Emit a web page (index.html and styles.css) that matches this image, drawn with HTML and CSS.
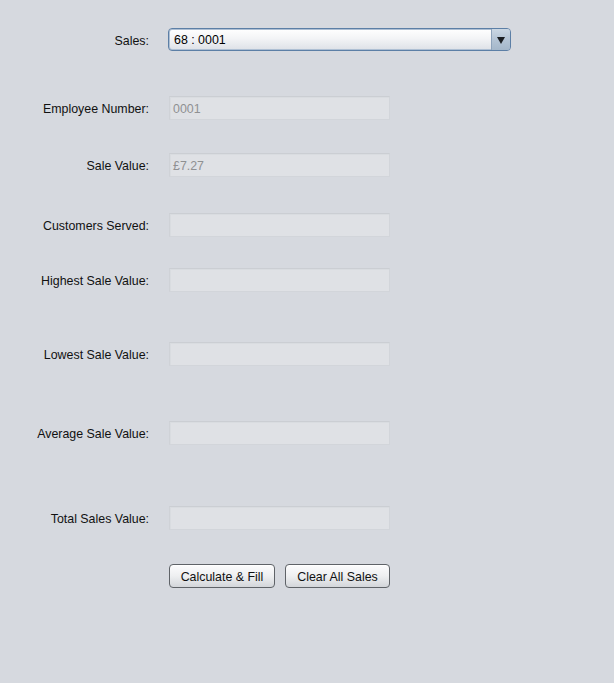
FILE: index.html
```html
<!DOCTYPE html>
<html>
<head>
<meta charset="utf-8">
<link rel="stylesheet" href="styles.css">
</head>
<body>
<div class="form">
  <div class="row row-combo">
    <span class="label">Sales:</span>
    <div class="combo">
      <span class="combo-text">68 : 0001</span>
      <span class="combo-btn"><span class="arrow"></span></span>
    </div>
  </div>
  <div class="row r1"><span class="label">Employee Number:</span><div class="field">0001</div></div>
  <div class="row r2"><span class="label">Sale Value:</span><div class="field">£7.27</div></div>
  <div class="row r3"><span class="label">Customers Served:</span><div class="field"></div></div>
  <div class="row r4"><span class="label">Highest Sale Value:</span><div class="field"></div></div>
  <div class="row r5"><span class="label">Lowest Sale Value:</span><div class="field"></div></div>
  <div class="row r6"><span class="label">Average Sale Value:</span><div class="field"></div></div>
  <div class="row r7"><span class="label">Total Sales Value:</span><div class="field"></div></div>
  <div class="row r8">
    <span class="label"></span>
    <div class="buttons">
      <button class="btn btn-calc">Calculate &amp; Fill</button>
      <button class="btn btn-clear">Clear All Sales</button>
    </div>
  </div>
</div>
</body>
</html>
```

FILE: styles.css
```css
html, body {
  margin: 0;
  padding: 0;
  background: #d6d9df;
  width: 614px;
  height: 683px;
  overflow: hidden;
}
body {
  font-family: "Liberation Sans", Arial, sans-serif;
  font-size: 12.4px;
  color: #000;
}
.form {
  display: flex;
  flex-direction: column;
  padding-top: 28px;
}
.row {
  display: flex;
  align-items: center;
  height: 24px;
}
.label {
  width: 149px;
  flex: none;
  text-align: right;
  margin-right: 20px;
  white-space: nowrap;
  padding-top: 2px;
  color: #111;
}
.row-combo { height: 23px; }
.row-combo .label { margin-right: 19px; }
.r1 { margin-top: 45px; }
.r2 { margin-top: 33px; }
.r3 { margin-top: 36px; }
.r4 { margin-top: 31px; }
.r5 { margin-top: 50px; }
.r6 { margin-top: 55px; }
.r7 { margin-top: 61px; }
.r8 { margin-top: 34px; }

.combo {
  box-sizing: border-box;
  width: 343px;
  height: 23px;
  border: 1px solid #5c7fa6;
  border-radius: 4px;
  background: linear-gradient(#ffffff 0%, #f3f4f6 45%, #dde1e7 100%);
  display: flex;
  align-items: stretch;
  box-shadow: inset 0 0 0 1px #aebfd3;
  overflow: hidden;
}
.combo-text {
  flex: 1;
  display: flex;
  align-items: center;
  padding-left: 5px;
  padding-top: 1px;
}
.combo-btn {
  width: 18px;
  border-left: 1px solid #8ea3bb;
  background: linear-gradient(#cbd7e3 0%, #b4c4d5 50%, #a4b7ca 100%);
  display: flex;
  align-items: center;
  justify-content: center;
}
.arrow {
  width: 0;
  height: 0;
  border-left: 4px solid transparent;
  border-right: 4px solid transparent;
  border-top: 7px solid #1b1e22;
  margin-top: 1px;
}

.field {
  box-sizing: border-box;
  width: 221px;
  height: 24px;
  background: #dfe1e5;
  border: 1px solid #d2d5da;
  border-top-color: #cbced3;
  border-left-color: #cfd2d7;
  box-shadow: inset 1px 1px 0 #d9dce0;
  color: #8f9092;
  display: flex;
  align-items: center;
  padding-left: 3px;
  padding-top: 1px;
}

.buttons {
  display: flex;
  gap: 10px;
}
.btn {
  box-sizing: border-box;
  height: 24px;
  border: 1px solid #5f6368;
  border-radius: 4px;
  background: linear-gradient(#fcfcfd 0%, #eeeff1 50%, #d3d6da 100%);
  font-family: "Liberation Sans", Arial, sans-serif;
  font-size: 12.4px;
  color: #111;
  padding: 1px 0 0;
  box-shadow: inset 0 1px 0 #ffffff;
}
.btn-calc { width: 106px; }
.btn-clear { width: 105px; }
```
